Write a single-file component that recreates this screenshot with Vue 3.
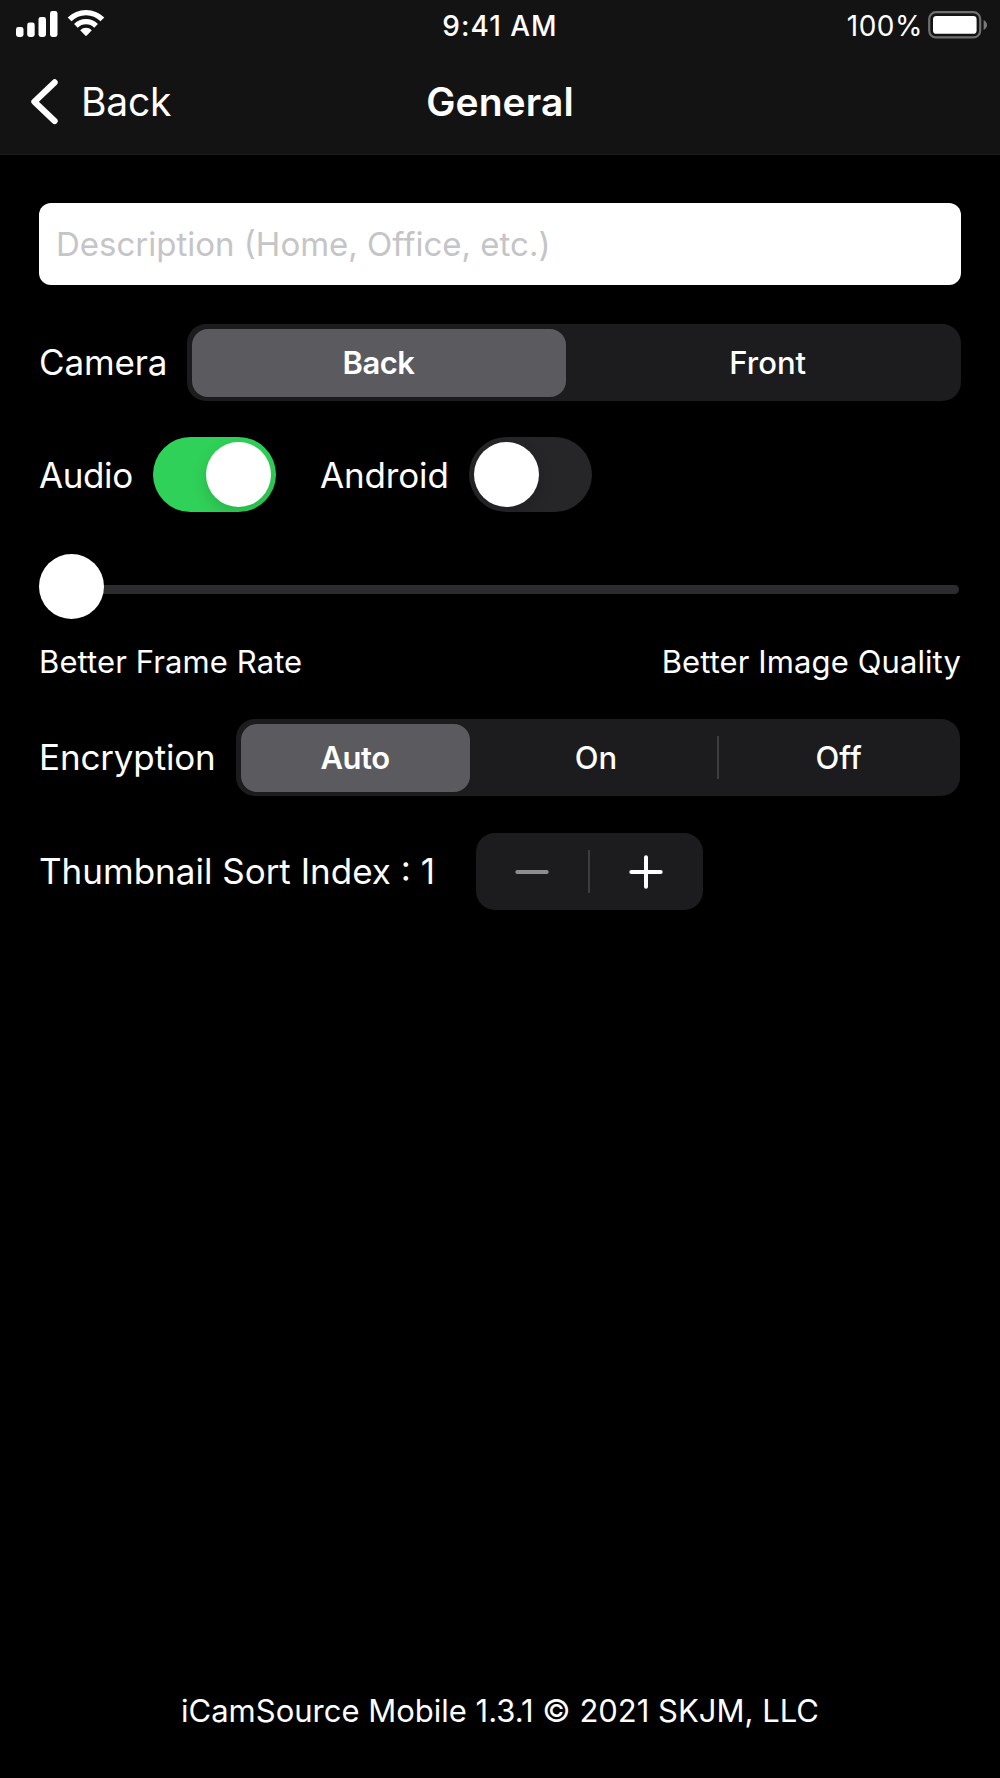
<template>
  <div class="screen">
    <header class="header">
      <div class="status-bar">
        <div class="status-left">
          <svg class="signal" width="42" height="26" viewBox="0 0 42 26" fill="#fff">
            <rect x="0" y="16" width="7.5" height="10" rx="2.4" />
            <rect x="11.2" y="11.5" width="7.5" height="14.5" rx="2.4" />
            <rect x="22.5" y="6" width="7.5" height="20" rx="2.4" />
            <rect x="34" y="0" width="7.5" height="26" rx="2.4" />
          </svg>
          <svg class="wifi" width="38" height="28" viewBox="0 0 38 28" fill="none" stroke="#fff">
            <path d="M2.6 10.4 A23.2 23.2 0 0 1 35.4 10.4" stroke-width="5.4" />
            <path d="M8.9 16.8 A14.3 14.3 0 0 1 29.1 16.8" stroke-width="5.2" />
            <path d="M13.2 21.2 A8.2 8.2 0 0 1 24.8 21.2 L19.8 26.6 Q19 27.4 18.2 26.6 Z" fill="#fff" stroke="none" />
          </svg>
        </div>
        <span class="time">9:41 AM</span>
        <div class="status-right">
          <span class="percent">100%</span>
          <svg class="battery" width="60" height="28" viewBox="0 0 60 28">
            <rect x="1.2" y="1.2" width="51" height="25.2" rx="6.8" fill="none" stroke="#6f6f6f" stroke-width="2.2" />
            <rect x="5" y="5" width="43.6" height="17.8" rx="3.4" fill="#fff" />
            <path d="M55.6 9 Q59 11 59 13.9 Q59 17 55.6 19 Z" fill="#7a7a7a" />
          </svg>
        </div>
      </div>
      <div class="nav-bar">
        <button class="back-btn" @click="goBack">
          <svg width="28" height="46" viewBox="0 0 28 46" fill="none" stroke="#fff" stroke-width="6.2" stroke-linecap="round" stroke-linejoin="round">
            <path d="M24.6 3.4 L4.4 22.7 L24.6 42" />
          </svg>
          <span class="back-label">Back</span>
        </button>
        <h1 class="title">General</h1>
      </div>
    </header>

    <main class="content">
      <input
        v-model="description"
        type="text"
        class="description"
        placeholder="Description (Home, Office, etc.)"
      />

      <div class="row camera-row">
        <span class="label camera-label">Camera</span>
        <div class="segmented cameras">
          <button
            v-for="option in cameras"
            :key="option"
            class="segment"
            :class="{ active: camera === option }"
            @click="camera = option"
          >
            {{ option }}
          </button>
        </div>
      </div>

      <div class="row switch-row">
        <span class="label audio-label">Audio</span>
        <button class="switch" :class="{ on: audio }" @click="audio = !audio"><i class="knob"></i></button>
        <span class="label android-label">Android</span>
        <button class="switch" :class="{ on: android }" @click="android = !android"><i class="knob"></i></button>
      </div>

      <div class="slider">
        <div class="thumb"></div>
        <div class="track"></div>
      </div>
      <div class="slider-labels">
        <span>Better Frame Rate</span>
        <span>Better Image Quality</span>
      </div>

      <div class="row encryption-row">
        <span class="label encryption-label">Encryption</span>
        <div class="segmented encryptions">
          <button
            v-for="option in encryptions"
            :key="option"
            class="segment"
            :class="{ active: encryption === option }"
            @click="encryption = option"
          >
            {{ option }}
          </button>
        </div>
      </div>

      <div class="row index-row">
        <span class="label index-label">Thumbnail Sort Index : {{ sortIndex }}</span>
        <div class="stepper">
          <button class="step minus" :disabled="sortIndex <= 1" @click="sortIndex--">
            <svg width="34" height="34" viewBox="0 0 34 34"><path d="M2.3 17 H31.7" /></svg>
          </button>
          <i class="divider"></i>
          <button class="step plus" @click="sortIndex++">
            <svg width="34" height="34" viewBox="0 0 34 34"><path d="M2.3 17 H31.7 M17 2.3 V31.7" /></svg>
          </button>
        </div>
      </div>
    </main>

    <footer class="footer">iCamSource Mobile 1.3.1 © 2021 SKJM, LLC</footer>
  </div>
</template>

<script setup>
import { ref } from 'vue';

const cameras = ['Back', 'Front'];
const encryptions = ['Auto', 'On', 'Off'];

const description = ref('');
const camera = ref('Back');
const audio = ref(true);
const android = ref(false);
const encryption = ref('Auto');
const sortIndex = ref(1);

function goBack() {
  window.history.back();
}
</script>

<style>
body {
  background: #000;
}
</style>

<style scoped>
.screen {
  display: flex;
  flex-direction: column;
  width: 1000px;
  height: 1778px;
  background: #000;
  color: #fff;
  font-family: Inter, "Liberation Sans", sans-serif;
  overflow: hidden;
}

button {
  padding: 0;
  border: none;
  background: none;
  color: inherit;
  font-family: inherit;
  cursor: pointer;
}

span,
h1 {
  white-space: nowrap;
}

svg {
  display: block;
  flex: none;
}

.header {
  height: 155px;
  box-sizing: border-box;
  background: #131313;
  border-bottom: 1px solid #1b1b1b;
}

.status-bar,
.nav-bar {
  display: grid;
  grid-template-columns: 1fr auto 1fr;
  align-items: center;
}

.status-bar {
  height: 50px;
}

.status-left {
  display: flex;
  gap: 9px;
  padding-left: 16px;
  align-self: start;
  padding-top: 9px;
}

.signal {
  margin-top: 2px;
}

.time {
  padding-top: 2px;
  font-size: 28px;
  font-weight: 500;
  letter-spacing: 1px;
}

.status-right {
  display: flex;
  justify-content: flex-end;
  align-items: center;
  gap: 5px;
  padding-right: 12px;
}

.percent {
  padding-top: 2px;
  font-size: 28px;
  letter-spacing: 0.5px;
}

.nav-bar {
  height: 103px;
}

.back-btn {
  display: flex;
  align-items: center;
  padding-left: 30px;
  gap: 23px;
}

.back-label {
  font-size: 39px;
  letter-spacing: -0.2px;
}

.title {
  margin: 0;
  font-size: 39px;
  font-weight: 600;
  letter-spacing: 0.1px;
}

.content {
  flex: 1;
  padding: 48px 39px 0;
}

.description {
  display: block;
  box-sizing: border-box;
  width: 922px;
  height: 82px;
  padding: 0 17px;
  border: none;
  border-radius: 12px;
  background: #fff;
  color: #000;
  font-family: inherit;
  font-size: 33px;
}

.description::placeholder {
  color: #c5c5c7;
  opacity: 1;
}

.row {
  display: flex;
  align-items: center;
}

.label {
  flex: none;
  padding-bottom: 1px;
  font-size: 35px;
  letter-spacing: -0.15px;
}

.camera-row {
  height: 77px;
  margin-top: 39px;
}

.camera-label {
  width: 148px;
}

.segmented {
  display: flex;
  flex: 1;
  box-sizing: border-box;
  height: 77px;
  padding: 4.5px 0 4.5px 4.5px;
  border-radius: 19px;
  background: #1c1c1e;
}

.segment {
  display: flex;
  flex: 1;
  align-items: center;
  justify-content: center;
  border-radius: 16px;
  font-size: 31px;
  font-weight: 500;
}

.segment.active {
  flex: none;
  background: #5b5a5f;
  font-weight: 600;
  letter-spacing: -0.5px;
}

.cameras .active {
  width: 374px;
  margin-right: 9px;
}

.encryptions {
  margin-right: 1px;
}

.encryptions .active {
  width: 229px;
  margin-right: 5px;
}

/* hairline between two neighbouring unselected segments */
.segment:not(.active) + .segment:not(.active)::before {
  content: "";
  width: 2px;
  height: 43px;
  margin-right: auto;
  background: #3d3d40;
}

.segment:not(.active) + .segment:not(.active)::after {
  content: "";
  width: 2px;
  margin-left: auto;
}

.switch-row {
  height: 75px;
  margin-top: 36px;
}

.audio-label {
  width: 114px;
  letter-spacing: -0.4px;
}

.switch-row .label {
  padding: 1px 0 0;
}

.android-label {
  width: 149px;
  margin-left: 44px;
}

.switch {
  display: flex;
  align-items: center;
  box-sizing: border-box;
  width: 123px;
  height: 75px;
  padding: 0 5px;
  border-radius: 38px;
  background: #262628;
}

.switch.on {
  justify-content: flex-end;
  background: #30d158;
}

.knob {
  width: 65px;
  height: 65px;
  border-radius: 50%;
  background: #fff;
  box-shadow: 0 6px 16px rgba(0, 0, 0, 0.15);
}

.slider {
  display: flex;
  align-items: center;
  height: 65px;
  margin-top: 42px;
}

.thumb {
  z-index: 1;
  width: 65px;
  height: 65px;
  border-radius: 50%;
  background: #fff;
}

.track {
  flex: 1;
  height: 9px;
  margin: 5px 2px 0 -32px;
  border-radius: 5px;
  background: #2c2c2e;
}

.slider-labels {
  display: flex;
  justify-content: space-between;
  align-items: center;
  height: 84px;
  margin-bottom: 16px;
  font-size: 31px;
  letter-spacing: 0.1px;
}

.encryption-row {
  height: 77px;
}

.encryption-label {
  width: 197px;
}

.index-row {
  height: 77px;
  margin-top: 37px;
}

.index-label {
  width: 437px;
  letter-spacing: 0;
}

.stepper {
  display: flex;
  align-items: center;
  width: 227px;
  height: 77px;
  border-radius: 19px;
  background: #1c1c1e;
}

.step {
  display: flex;
  flex: 1;
  align-items: center;
  justify-content: center;
}

.minus {
  flex: 0 0 112px;
}

.plus svg {
  margin-right: 2px;
}

.divider {
  width: 2px;
  height: 43px;
  background: #3d3d40;
}

.step path {
  fill: none;
  stroke: #fff;
  stroke-width: 4;
  stroke-linecap: round;
}

.step:disabled path {
  stroke: #8e8e90;
}

.footer {
  height: 86px;
  font-size: 31px;
  text-align: center;
}
</style>
